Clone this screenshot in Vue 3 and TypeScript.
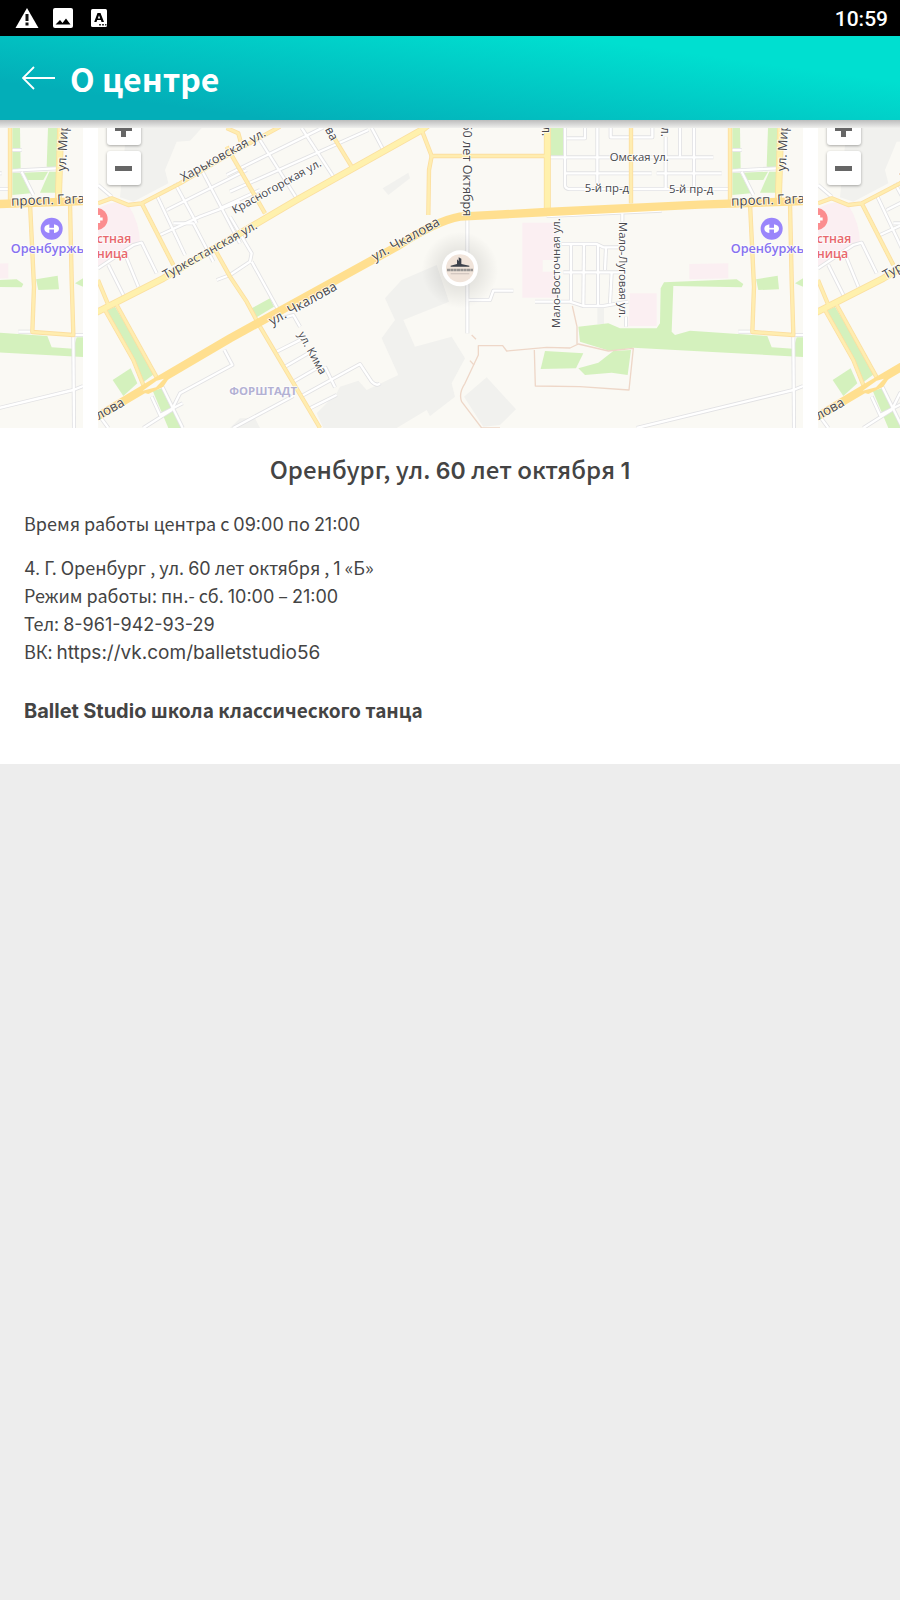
<script setup lang="ts">
interface Label {
  text: string
  x: number
  y: number
  angle: number
  size: number
  kind?: string
}

interface Segment {
  text: string
  kind: string
}

const slides = [0, 1, 2]

const greys = [
  'M380 24H605L570 62L530 65L495 150L505 190L400 245L360 232Z',
  'M1148 205L1225 158L1230 175L1165 225Z',
  'M1205 480L1310 435L1347 545L1210 600L1245 680L1355 650L1395 715L1355 790L1365 830L1290 888L1280 870L1190 924H970L950 880L1010 820L1020 800L1075 782L1100 810L1195 765L1145 655L1185 600L1155 535Z',
  'M1460 772L1548 868L1500 915L1450 920L1392 830Z',
  'M1792 560H1812V612H1792Z',
  'M690 924L720 895H765L780 924Z',
]

const pinks = [
  'M294 265Q350 235 385 255Q420 310 420 370L294 440Z',
  'M1567 308H1670V420H1628V455H1670V533H1567Z',
  'M1890 520H1970V618H1885Z',
  'M2068 432L2185 430V475L2068 478Z',
]

const greens = [
  'M322 570L345 560L465 760L428 788Z',
  'M458 812L487 805L548 924H505Z',
  'M338 780L392 745L412 790L370 828Z',
  'M755 565L810 535L822 560L770 592Z',
  'M1652 24H1690V107H1652Z',
  'M1735 620L1825 610L1860 625H1970L1980 610L1982 505L1992 487L2210 478L2230 492L2225 502L2020 498L2015 635L2025 645L2070 632L2302 648L2315 682L2380 686L2390 652H2409V711L1900 683L1830 693L1740 665Z',
  'M1635 693L1750 700L1728 745L1622 747Z',
  'M1735 745L1795 728L1840 693L1893 690L1883 765L1835 758L1755 765Z',
  'M2197 24H2220L2222 145L2197 150Z',
  'M2304 24H2332L2330 145L2300 140Z',
  'M2197 158H2220L2253 220L2197 225Z',
  'M2225 158L2304 155L2290 180H2240Z',
  'M2308 155H2330L2328 218H2280Z',
  'M2268 478L2333 467L2337 508L2275 510Z',
  'M2385 490L2409 475V500Z',
]

const lanes = [
  // blocks between Kharkovskaya and Turkestanskaya
  'M470 225L555 405', 'M525 190L590 310', 'M605 150L720 370', 'M500 270L560 240L740 150', 'M480 345L600 290L720 245',
  'M520 310L580 310L640 425', 'M294 195L335 230', 'M294 445L400 375L425 368L470 460', 'M325 435L370 525', 'M370 390L415 500',
  // Krasnogorskaya side
  'M680 165L970 22', 'M690 215L1105 30', 'M660 265L780 210', 'M780 60L890 235', 'M905 24L1000 170', 'M1115 24L1150 90',
  'M690 290L755 400L750 425L690 465', 'M755 425L835 570', 'M690 465L650 480',
  // Forshtadt
  'M845 595L880 585L900 620', 'M830 695L910 655', 'M855 740L925 700', 'M880 785L950 745', 'M905 828L1080 732L1115 785Q1130 800 1140 790',
  'M975 740L1005 802', 'M930 865L1010 825', 'M700 924L880 828', 'M673 690L697 735L540 820L515 870L430 924',
  'M455 830L480 885L548 850', 'M487 800L548 924', 'M300 890L325 924',
  // 60 let Oktyabrya and the quarters east of it
  'M1402 300V640', 'M1405 540H1470L1480 512H1540', 'M1640 288L1985 272', 'M1867 280V305',
  'M1605 545H1710L1750 558H1810L1885 545', 'M1685 372H1790L1810 382H1855', 'M1690 457H1870', 'M1713 372V545', 'M1752 372L1750 555',
  'M1794 372V555', 'M1818 382L1815 450', 'M1835 457L1830 550', 'M1878 590V620',
  'M1650 112H2140', 'M1695 160H1955', 'M1970 160H2165', 'M1695 24V195Q1695 207 1710 207H2190', 'M1792 24V190',
  'M1700 55H1755V24', 'M1832 24V52H1957V24', 'M1997 50V205', 'M2082 24V205', 'M2040 24V110',
  'M2197 152L2330 145', 'M2225 155L2260 225', 'M2215 635H2260', 'M2380 650L2382 924', 'M1910 924L2380 810L2409 798', 'M2380 645H2409', 'M2197 90H2225',
]

const trails = [
  'M1500 924H1445L1385 845Q1375 820 1395 790L1435 705V677H1508L1520 693L1640 682L1710 684L1735 672L1825 693L1900 685L1887 810L1740 800L1606 798L1603 690',
  'M1717 558L1731 620V672', 'M1415 645L1428 658', 'M1410 722L1422 735',
]

const minorRoads = [
  'M294 250L335 235L385 255L425 250L540 190L690 102L840 20', 'M425 250L520 435', 'M680 24L715 40L722 65', 'M680 80L795 280',
  'M1000 50L1055 140', 'M1265 30L1295 108H1640', 'M1295 108L1287 150L1285 285', 'M1893 24V250', 'M2190 24V240',
  'M2250 250L2262 500L2257 636L2380 645L2375 480L2370 250', 'M640 380L690 470L740 545L780 620L960 924', 'M294 480L325 555',
  'M315 570L400 720L432 800', 'M350 555L470 772',
]

const wideRoads = ['M280 582L490 475L890 240L1265 30L1290 10', 'M1642 24V270', 'M2342 24L2335 240']

const mainRoad = 'M280 897L460 790L690 655L1190 380Q1310 302 1380 290L1640 276L2100 254L2420 243'

const labels: Label[] = [
  { text: 'Харьковская ул.', x: 550, y: 185, angle: -29, size: 37 },
  { text: 'Красногорская ул.', x: 704, y: 282, angle: -29, size: 34 },
  { text: 'Туркестанская ул.', x: 497, y: 478, angle: -29, size: 37 },
  { text: 'ва', x: 974, y: 28, angle: 62, size: 37 },
  { text: 'ул. Чкалова', x: 816, y: 617, angle: -29, size: 40 },
  { text: 'ул. Чкалова', x: 1124, y: 424, angle: -29, size: 40 },
  { text: 'лова', x: 296, y: 900, angle: -29, size: 40 },
  { text: 'ул. Кима', x: 893, y: 643, angle: 61, size: 34 },
  { text: '60 лет Октября', x: 1390, y: 10, angle: 90, size: 38 },
  { text: 'л.', x: 1627, y: 18, angle: 90, size: 37 },
  { text: 'л.', x: 1984, y: 20, angle: 90, size: 37 },
  { text: 'Омская ул.', x: 1829, y: 124, angle: 0, size: 34 },
  { text: '5-й пр-д', x: 1754, y: 217, angle: 0, size: 34 },
  { text: '5-й пр-д', x: 2007, y: 220, angle: 0, size: 34 },
  { text: 'Мало-Восточная ул.', x: 1681, y: 624, angle: -90, size: 34 },
  { text: 'Мало-Луговая ул.', x: 1856, y: 306, angle: 90, size: 34 },
  { text: 'ул. Мира', x: 2357, y: 154, angle: -87, size: 38 },
  { text: 'просп. Гагарина', x: 2194, y: 257, angle: -2, size: 40 },
  { text: 'ФОРШТАДТ', x: 688, y: 826, angle: 0, size: 34, kind: 'district' },
  { text: 'Оренбуржье', x: 2192, y: 399, angle: 0, size: 38, kind: 'sport' },
  { text: 'стная', x: 290, y: 370, angle: 0, size: 37, kind: 'clinic' },
  { text: 'ница', x: 290, y: 415, angle: 0, size: 37, kind: 'clinic' },
]

const addressLines = [
  '4. Г. Оренбург , ул. 60 лет октября , 1 «Б»',
  'Режим работы: пн.- сб. 10:00 – 21:00',
  'Тел: 8-961-942-93-29',
  'ВК: https://vk.com/balletstudio56',
]

/** Splits a line into Cyrillic, number and Latin-word runs, which are styled separately. */
function runs(text: string): Segment[] {
  const parts = text.match(/[A-Za-z0-9:/.\-–]*[A-Za-z0-9][A-Za-z0-9:/.\-–]*|[^A-Za-z0-9]+/g) ?? []
  return parts.map((part) => ({
    text: part,
    kind: /[A-Za-z]/.test(part) ? 'latin word' : /[0-9]/.test(part) ? 'latin' : '',
  }))
}
</script>

<template>
  <div class="screen">
    <div class="status">
      <div class="status-icons">
        <svg width="24" height="22" viewBox="0 0 24 22" aria-hidden="true">
          <path d="M12 1L23.500 21H.5Z" fill="#fff" />
          <path d="M10.500 7h3v7h-3zM10.500 15.500h3v3h-3z" fill="#111" />
        </svg>
        <svg width="20" height="20" viewBox="0 0 20 20" aria-hidden="true">
          <rect width="20" height="20" rx="2" fill="#fff" />
          <path d="M2.500 16.500L7 12l2.500 3L13 10.500l4.500 6z" fill="#000" />
        </svg>
        <svg width="16" height="18" viewBox="0 0 16 18" aria-hidden="true">
          <rect width="16" height="18" rx="1.500" fill="#fff" />
          <path fill-rule="evenodd" d="M6.500 4h3L13 13h-2.500l-.6-2H6.200l-.7 2H3.200zM8 6.200L6.800 9.400h2.400z" fill="#000" />
          <path d="M8 15h2v1.500H8zM11 15h2v1.500h-2zM14 15h1.500v1.500H14z" fill="#333" />
        </svg>
      </div>
      <time class="clock">10:59</time>
    </div>

    <header class="bar">
      <button class="back" type="button" aria-label="Назад">
        <svg width="34" height="24" viewBox="0 0 34 24" aria-hidden="true">
          <path d="M33 12H1M12 1L1 12l11 11" fill="none" stroke="#fff" stroke-width="1.800" />
        </svg>
      </button>
      <h1>О центре</h1>
    </header>

    <main>
      <div class="shade"></div>
      <div class="carousel">
        <div v-for="slide in slides" :key="slide" class="slide">
          <svg class="map" viewBox="294 24 2115 900" preserveAspectRatio="xMidYMid slice" role="img" aria-label="Карта">
            <rect x="294" y="24" width="2115" height="900" fill="#faf9f4" />
            <path v-for="d in greys" :key="d" :d="d" fill="#f1f1ee" />
            <path v-for="d in pinks" :key="d" :d="d" fill="#fbeff2" />
            <path v-for="d in greens" :key="d" :d="d" fill="#d4f1bd" />
            <path v-for="d in trails" :key="d" :d="d" class="trail" />
            <path v-for="d in lanes" :key="'c' + d" :d="d" class="lane-case" />
            <path v-for="d in lanes" :key="d" :d="d" class="lane" />
            <path v-for="d in minorRoads" :key="'c' + d" :d="d" class="minor-case" />
            <path v-for="d in wideRoads" :key="'c' + d" :d="d" class="wide-case" />
            <path v-for="d in minorRoads" :key="d" :d="d" class="minor" />
            <path v-for="d in wideRoads" :key="d" :d="d" class="wide" />
            <path :d="mainRoad" class="main-road" />
            <path d="M420 815L470 770H510L490 800L445 822Z" fill="#ffdf8f" />
            <path d="M428 812L470 782L492 776L468 802Z" fill="#faf9f4" />

            <circle cx="290" cy="297" r="33" fill="#fb8d8f" />
            <path d="M284 297H308M296 285V309" stroke="#fff" stroke-width="9" />
            <circle cx="2315" cy="326" r="33" fill="#9a85fb" />
            <path d="M2300 326H2330" stroke="#fff" stroke-width="5" />
            <path d="M2308 313V339Q2293 336 2293 326T2308 313M2322 313V339Q2337 336 2337 326T2322 313" fill="#fff" />

            <text
              v-for="(label, i) in labels"
              :key="i"
              :class="['label', label.kind]"
              :font-size="label.size"
              :transform="`translate(${label.x} ${label.y}) rotate(${label.angle})`"
            >{{ label.text }}</text>

            <circle cx="1380" cy="450" r="115" fill="url(#glow)" />
            <circle cx="1380" cy="445" r="54" fill="#fff" />
            <circle cx="1380" cy="445" r="42" fill="#f1e4da" />
            <path d="M1352 437L1371 432V418L1376 423V412L1384 416V432L1408 437V440H1352Z" fill="#3c414b" />
            <path d="M1341 450H1419" stroke="#999694" stroke-width="7" stroke-dasharray="9 1" />
            <path d="M1352 461H1408" stroke="#d3c7c0" stroke-width="4" />
            <defs>
              <radialGradient id="glow">
                <stop offset="40%" stop-color="#000" stop-opacity=".09" />
                <stop offset="100%" stop-color="#000" stop-opacity="0" />
              </radialGradient>
            </defs>
          </svg>
          <div class="zoom">
            <button type="button" aria-label="Приблизить">
              <svg width="17" height="17" viewBox="0 0 17 17" aria-hidden="true"><path d="M0 8.500H17M8.500 0V17" stroke="#666" stroke-width="5" /></svg>
            </button>
            <button type="button" aria-label="Отдалить">
              <svg width="17" height="17" viewBox="0 0 17 17" aria-hidden="true"><path d="M0 8.500H17" stroke="#666" stroke-width="5" /></svg>
            </button>
          </div>
        </div>
      </div>

      <section class="info">
        <h2><span v-for="(r, i) in runs('Оренбург, ул. 60 лет октября 1')" :key="i" :class="r.kind">{{ r.text }}</span></h2>
        <p class="hours"><span v-for="(r, i) in runs('Время работы центра с 09:00 по 21:00')" :key="i" :class="r.kind">{{ r.text }}</span></p>
        <p v-for="line in addressLines" :key="line"><span v-for="(r, i) in runs(line)" :key="i" :class="r.kind">{{ r.text }}</span></p>
        <p class="studio"><span v-for="(r, i) in runs('Ballet Studio школа классического танца')" :key="i" :class="r.kind">{{ r.text }}</span></p>
      </section>
    </main>
  </div>
</template>

<style>
body {
  background: #ededed;
}
</style>

<style scoped>
.screen {
  min-height: 100vh;
  background: #ededed;
  color: #444;
  font-family: "Noto Sans CJK SC", "Noto Sans", sans-serif;
}

.status {
  display: flex;
  align-items: center;
  justify-content: space-between;
  height: 36px;
  padding: 0 12px 0 15px;
  background: #000;
}

.status-icons {
  display: flex;
  align-items: center;
  gap: 14px;
}

.status-icons svg:last-child {
  margin-left: 4px;
}

.clock {
  padding-top: 2px;
  color: #fff;
  font: 500 21px/34px Roboto, sans-serif;
}

.bar {
  display: flex;
  align-items: center;
  gap: 14px;
  height: 84px;
  padding: 0 22px;
  background: linear-gradient(8deg, #03aeb8 18%, #00dfd0 78%);
}

.back {
  display: flex;
  padding: 0;
  border: 0;
  background: none;
}

h1 {
  margin: 0;
  color: #fff;
  font-size: 32px;
  font-weight: 700;
  line-height: 84px;
}

main {
  background: #fff;
}

.shade {
  height: 8px;
  background: linear-gradient(#bcbcbc, #efefed);
}

.carousel {
  display: flex;
  justify-content: center;
  gap: 15px;
  overflow: hidden;
}

.slide {
  position: relative;
  flex: 0 0 calc(100% - 195px);
  overflow: hidden;
}

.map {
  display: block;
  width: 100%;
  height: auto;
}

.map path {
  stroke-linejoin: round;
}

.trail {
  fill: none;
  stroke: #eed7c8;
  stroke-width: 4;
}

.lane-case,
.lane,
.minor-case,
.minor,
.wide-case,
.wide,
.main-road {
  fill: none;
}

.lane-case {
  stroke: #e2e2e4;
  stroke-width: 12;
}

.lane {
  stroke: #fff;
  stroke-width: 7;
}

.minor-case {
  stroke: #fcdfa0;
  stroke-width: 13;
}

.minor {
  stroke: #ffedb0;
  stroke-width: 8;
}

.wide-case {
  stroke: #fbe0a0;
  stroke-width: 21;
}

.wide {
  stroke: #fff1ad;
  stroke-width: 16;
}

.main-road {
  stroke: #ffdf8f;
  stroke-width: 25;
}

.label {
  fill: #48484c;
  stroke: #fff;
  stroke-width: 5;
  stroke-opacity: 0.8;
  paint-order: stroke;
  font-family: "Open Sans", "Noto Sans", sans-serif;
  font-weight: 500;
}

.district {
  fill: #b3b1d3;
  font-weight: 700;
}

.sport {
  fill: #8672f0;
  font-weight: 600;
}

.clinic {
  fill: #e8686c;
  font-weight: 600;
}

.zoom {
  position: absolute;
  top: -17px;
  left: 9px;
  display: grid;
  gap: 6px;
}

.zoom button {
  display: grid;
  place-items: center;
  width: 34px;
  height: 34px;
  padding: 0;
  border: 0;
  border-radius: 3px;
  background: #fff;
  box-shadow: 0 1px 3px #0005;
}

.info {
  padding: 22px 24px 40px;
}

h2 {
  margin: 0 0 21px;
  font-size: 24px;
  font-weight: 500;
  line-height: 38px;
  text-align: center;
}

p {
  margin: 0;
  font-size: 18px;
  line-height: 28px;
}

.hours {
  margin-bottom: 16px;
}

.studio {
  margin-top: 31px;
  font-size: 19px;
  font-weight: 700;
}

.latin {
  font-family: Inter, sans-serif;
  line-height: 1;
}

.word {
  font-size: 19px;
}

h2 .latin {
  font-size: 23px;
  font-weight: 600;
}

.studio .word {
  font-size: 20px;
}
</style>
